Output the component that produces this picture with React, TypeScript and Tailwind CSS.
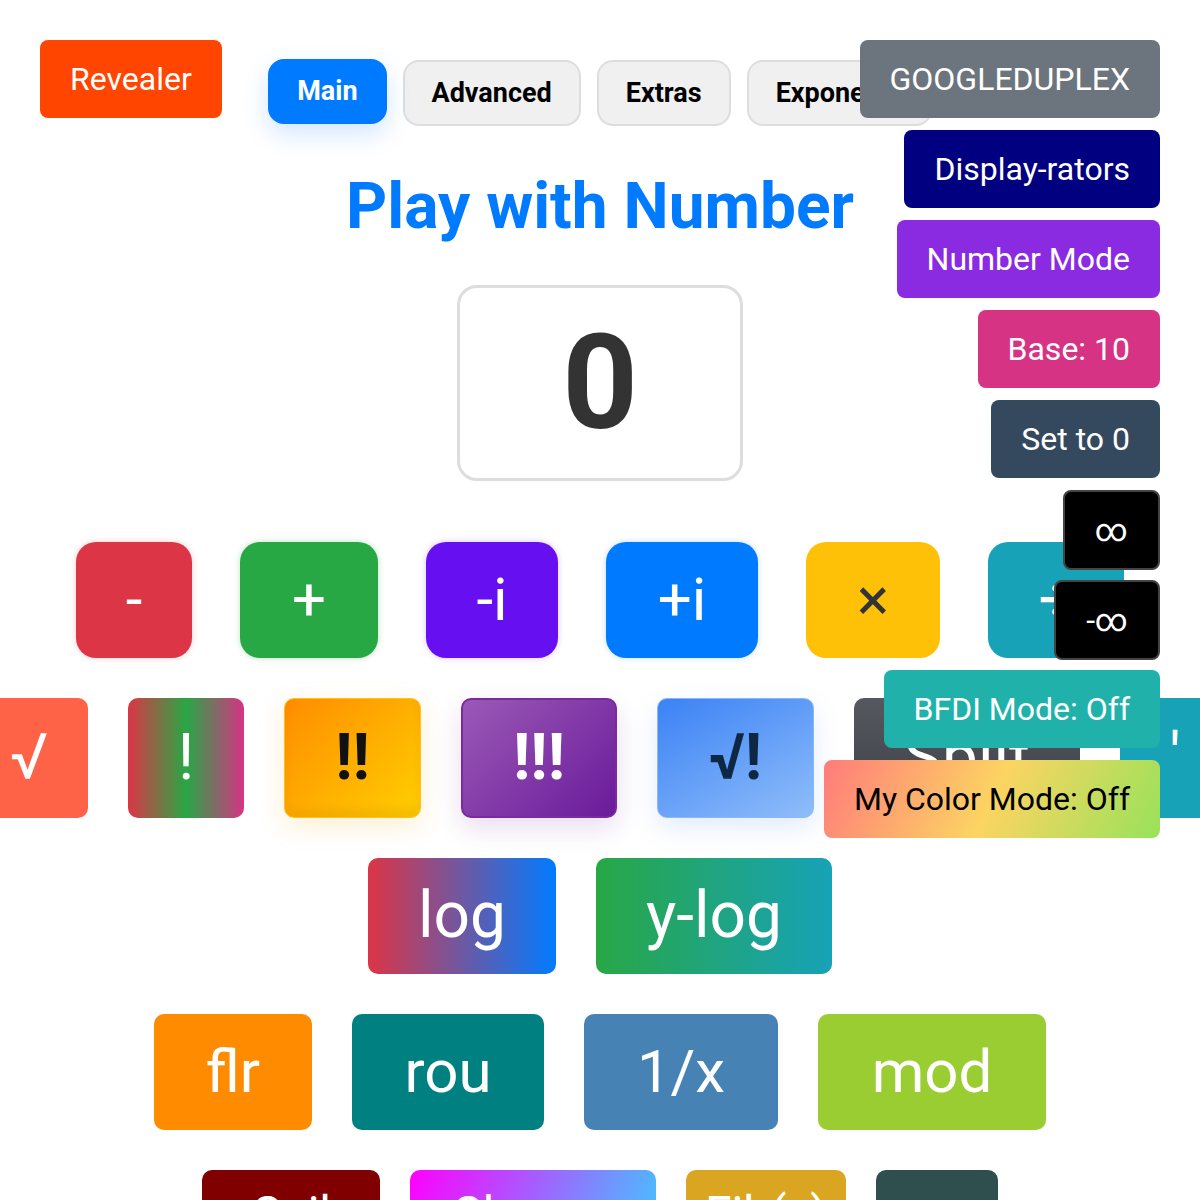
import React from "react"

const sideButtons = [
    { label: "GOOGLEDUPLEX", cls: "bg-[#6c757d] text-white" },
    { label: "Display-rators", cls: "bg-[#000080] text-white" },
    { label: "Number Mode", cls: "bg-[#8a2be2] text-white" },
    { label: "Base: 10", cls: "bg-[#d63384] text-white" },
    { label: "Set to 0", cls: "bg-[#34495e] text-white" },
]

const tabs = ["Main", "Advanced", "Extras", "Exponents"]

const rowOne = [
    { label: "-", cls: "w-[116px] bg-[#dc3545] text-white shadow-[0_0_6px_rgba(220,53,69,0.25)]" },
    { label: "+", cls: "w-[138px] bg-[#28a745] text-white shadow-[0_0_6px_rgba(40,167,69,0.3)]" },
    { label: "-i", cls: "w-[132px] bg-[#6610f2] text-white shadow-[0_0_6px_rgba(102,16,242,0.25)]" },
    { label: "+i", cls: "w-[152px] bg-[#007bff] text-white shadow-[0_0_6px_rgba(0,123,255,0.25)]" },
    { label: "×", cls: "w-[134px] bg-[#ffc107] text-[#333]" },
    { label: "÷", cls: "w-[136px] bg-[#17a2b8] text-white" },
]

export default function App() {
    return <div className="relative w-full min-h-[1200px] overflow-hidden bg-white font-['Roboto','Liberation_Sans',sans-serif]">

        <button className="absolute left-[40px] top-[40px] z-20 h-[78px] px-[30px] rounded-[8px] bg-[#ff4500] text-white text-[32px] leading-none">Revealer</button>

        {/* mode switches float over the page on the right */}
        <div className="absolute right-[40px] top-[40px] z-20 flex flex-col items-end gap-[12px]">
            {sideButtons.map(b => <button key={b.label} className={`h-[78px] px-[30px] rounded-[8px] text-[32px] leading-none ${b.cls}`}>{b.label}</button>)}
            <button className="h-[80px] -mb-[2px] px-[30px] rounded-[8px] border-2 border-[#444] bg-black text-white text-[32px] leading-none">∞</button>
            <button className="h-[80px] -mb-[2px] px-[30px] rounded-[8px] border-2 border-[#444] bg-black text-white text-[32px] leading-none">-∞</button>
            <button className="h-[78px] px-[30px] rounded-[8px] bg-[#20b2aa] text-white text-[32px] leading-none">BFDI Mode: Off</button>
            <button className="h-[78px] px-[30px] rounded-[8px] bg-[linear-gradient(115deg,#ff7b7b_0%,#fcd462_50%,#98e25a_100%)] text-black text-[32px] leading-none">My Color Mode: Off</button>
        </div>

        <div className="flex flex-col items-center pt-[60px]">
            <div className="flex items-start gap-[16px]">
                {tabs.map(t => t === "Main"
                    ? <button key={t} className="h-[65px] -translate-y-[1px] px-[27px] rounded-[16px] border-2 border-[#007bff] bg-[#007bff] text-white text-[27px] font-bold leading-none shadow-[0_10px_25px_rgba(0,123,255,0.18)]">{t}</button>
                    : <button key={t} className="h-[66px] px-[27px] rounded-[16px] border-2 border-[#dddddd] bg-[#f0f0f0] text-black text-[27px] font-bold leading-none">{t}</button>)}
            </div>

            <h1 className="mt-[42px] text-[64px] leading-[77px] font-bold text-[#007bff]">Play with Number</h1>

            <div className="mt-[40px] w-[286px] h-[196px] flex items-center justify-center rounded-[20px] border-[3px] border-[#dddddd] bg-white">
                <span className="text-[132px] leading-none font-bold text-[#333]">0</span>
            </div>

            <div className="mt-[61px] flex flex-col items-center gap-[40px] w-full">
                <div className="flex justify-center gap-[48px]">
                    {rowOne.map(b => <button key={b.label} className={`h-[116px] rounded-[20px] text-[60px] leading-none flex items-center justify-center ${b.cls}`}>{b.label}</button>)}
                </div>

                <div className="flex flex-nowrap justify-center gap-[40px] w-full">
                    <button className="shrink-0 w-[118px] h-[120px] rounded-[10px] bg-[#ff6347] text-white text-[64px] leading-none flex items-center justify-center">√</button>
                    <button className="shrink-0 w-[116px] h-[120px] rounded-[10px] bg-[linear-gradient(to_right,#dc3545,#28a745,#d63384)] text-white text-[64px] leading-none flex items-center justify-center">!</button>
                    <button className="shrink-0 w-[137px] h-[120px] rounded-[10px] border border-[#ffc21a] bg-[linear-gradient(135deg,#ff8c00,#ffcf00)] text-[#111] text-[64px] font-bold leading-none flex items-center justify-center shadow-[inset_0_-8px_8px_rgba(180,110,0,0.15),0_8px_26px_rgba(255,165,0,0.18)]">!!</button>
                    <button className="shrink-0 w-[156px] h-[120px] rounded-[10px] border-2 border-[#7a2a9c] bg-[linear-gradient(135deg,#9b59b6,#6a1b9a)] text-white text-[64px] font-bold leading-none flex items-center justify-center shadow-[0_10px_26px_rgba(106,27,154,0.15)]">!!!</button>
                    <button className="shrink-0 w-[157px] h-[120px] rounded-[10px] border border-[#8bb8f5] bg-[linear-gradient(150deg,#3b82f6,#8fbdf9)] text-[#0d2745] text-[64px] font-bold leading-none flex items-center justify-center shadow-[0_10px_26px_rgba(59,130,246,0.15)]">√!</button>
                    <button className="shrink-0 w-[226px] h-[120px] rounded-[10px] bg-[linear-gradient(to_bottom,#55595f,#3a3e45)] text-white text-[64px] leading-none flex items-center justify-center">Split</button>
                    <button className="shrink-0 w-[110px] h-[120px] rounded-[10px] bg-[#17a2b8] text-white text-[64px] leading-none flex items-center justify-center">'</button>
                </div>

                <div className="flex justify-center gap-[40px]">
                    <button className="w-[188px] h-[116px] rounded-[10px] bg-[linear-gradient(to_right,#dc3545,#007bff)] text-white text-[64px] leading-none flex items-center justify-center">log</button>
                    <button className="w-[236px] h-[116px] rounded-[10px] bg-[linear-gradient(to_right,#28a745,#17a2b8)] text-white text-[64px] leading-none flex items-center justify-center">y-log</button>
                </div>

                <div className="flex justify-center gap-[40px]">
                    <button className="w-[158px] h-[116px] rounded-[10px] bg-[#ff8c00] text-white text-[60px] leading-none flex items-center justify-center">flr</button>
                    <button className="w-[192px] h-[116px] rounded-[10px] bg-[#008080] text-white text-[60px] leading-none flex items-center justify-center">rou</button>
                    <button className="w-[194px] h-[116px] rounded-[10px] bg-[#4682b4] text-white text-[60px] leading-none flex items-center justify-center">1/x</button>
                    <button className="w-[228px] h-[116px] rounded-[10px] bg-[#9acd32] text-white text-[60px] leading-none flex items-center justify-center">mod</button>
                </div>

                <div className="flex justify-center gap-[30px]">
                    <button className="w-[178px] h-[116px] pt-[20px] rounded-[10px] bg-[#800000] text-white text-[48px] leading-none flex items-start justify-center">Ceil</button>
                    <button className="w-[246px] h-[116px] pt-[20px] rounded-[10px] bg-[linear-gradient(110deg,#ff00ff,#38d0ff)] text-white text-[48px] leading-none flex items-start justify-center">Change</button>
                    <button className="w-[160px] h-[116px] pt-[20px] rounded-[10px] bg-[#daa520] text-white text-[48px] leading-none flex items-start justify-center">Fib(x)</button>
                    <button className="w-[122px] h-[116px] pt-[20px] rounded-[10px] bg-[#2f4f4f] text-white text-[48px] leading-none flex items-start justify-center">ave</button>
                </div>
            </div>
        </div>
    </div>
}
